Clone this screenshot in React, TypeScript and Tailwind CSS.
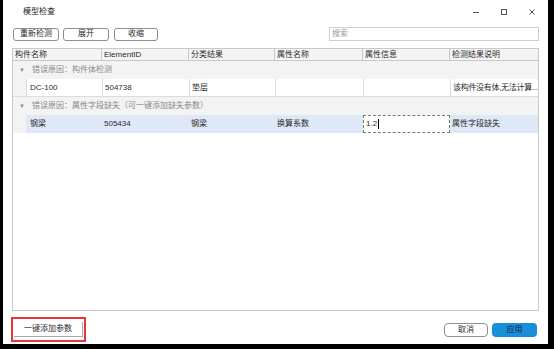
import React from 'react';

const font = { fontFamily: '"Liberation Sans", "Noto Sans CJK SC", sans-serif' };

const cols = ['w-[89px]', 'w-[87px]', 'w-[86px]', 'w-[88px]', 'w-[87px]', 'flex-1'];

const GroupRow: React.FC<{ label: string }> = ({ label }) => (
  <div className="flex h-[18px] items-center bg-[#f3f3f3] text-[#8a8a8a]">
    <span className="ml-[6px] mr-[7px] text-[6px] leading-none">▼</span>
    <span>{label}</span>
  </div>
);

export default function App() {
  return (
    <div className="flex h-[349px] w-[554px] bg-black text-[8px] text-[#2b2b2b]" style={font}>
      <div className="ml-[3px] flex h-[344px] w-[545px] flex-col bg-white px-[9px]">
        {/* title bar */}
        <div className="flex h-[21px] items-center pt-[2px]">
          <span className="ml-[11px] text-[#222]">模型检查</span>
          <div className="ml-auto mr-[4px] flex items-center gap-[22px] text-[#555]">
            <svg width="6" height="6" viewBox="0 0 6 6">
              <line x1="0" y1="3.5" x2="6" y2="3.5" stroke="#555" strokeWidth="1" />
            </svg>
            <svg width="6" height="6" viewBox="0 0 6 6">
              <rect x="0.5" y="0.5" width="5" height="5" fill="none" stroke="#555" strokeWidth="1" />
            </svg>
            <svg width="6" height="6" viewBox="0 0 6 6">
              <path d="M0.5 0.5L5.5 5.5M5.5 0.5L0.5 5.5" stroke="#555" strokeWidth="1" />
            </svg>
          </div>
        </div>

        {/* toolbar */}
        <div className="mt-[6px] flex h-[14px] items-center">
          <button className="ml-[1px] h-[13px] w-[46px] rounded-[3px] border border-[#8f8f8f] bg-white leading-none">重新检测</button>
          <button className="ml-[4px] h-[13px] w-[46px] rounded-[3px] border border-[#8f8f8f] bg-white leading-none">展开</button>
          <button className="ml-[5px] h-[13px] w-[44px] rounded-[3px] border border-[#8f8f8f] bg-white leading-none">收缩</button>
          <div className="ml-auto flex h-[14px] w-[210px] items-center border border-[#cfcfcf] pl-[2px] text-[#9a9a9a]">搜索</div>
        </div>

        {/* table */}
        <div className="mt-[7px] flex h-[263px] flex-col border border-[#c9c9c9]">
          <div className="flex h-[12px] items-center border-b border-[#c9c9c9] bg-[#f4f4f4]">
            {['构件名称', 'ElementID', '分类结果', '属性名称', '属性信息', '检测结果说明'].map((h, i) => (
              <div key={h} className={`${cols[i]} flex h-full items-center border-r border-[#c9c9c9] pl-[2px] last:border-r-0`}>
                {h}
              </div>
            ))}
          </div>

          <GroupRow label="错误原因：构件体检测" />

          <div className="flex h-[18px] items-stretch border-b border-[#dcdcdc] bg-[#f3f3f3]">
            <div className="ml-[13px] flex flex-1 border-l border-[#dcdcdc] bg-white">
              <div className="flex w-[76px] items-center border-r border-[#dcdcdc] pl-[3px]">DC-100</div>
              <div className="flex w-[87px] items-center border-r border-[#dcdcdc] pl-[2px]">504738</div>
              <div className="flex w-[86px] items-center border-r border-[#dcdcdc] pl-[2px]">垫层</div>
              <div className="flex w-[88px] items-center border-r border-[#dcdcdc] pl-[2px]"></div>
              <div className="flex w-[87px] items-center border-r border-[#dcdcdc] pl-[2px]"></div>
              <div className="flex min-w-0 flex-1 items-center overflow-hidden whitespace-nowrap pl-[2px] tracking-[-0.3px]">该构件没有体,无法计算...</div>
            </div>
          </div>

          <GroupRow label="错误原因：属性字段缺失（可一键添加缺失参数）" />

          <div className="flex h-[18px] items-stretch bg-[#f3f3f3]">
            <div className="ml-[13px] flex flex-1 bg-[#dfe8f7]">
              <div className="flex w-[76px] items-center pl-[4px]">钢梁</div>
              <div className="flex w-[87px] items-center pl-[2px]">505434</div>
              <div className="flex w-[86px] items-center pl-[2px]">钢梁</div>
              <div className="flex w-[88px] items-center pl-[2px]">换算系数</div>
              <div className="flex w-[87px] items-center border border-dashed border-[#7a7a7a] bg-white pl-[2px]">
                1.2<span className="ml-[1px] h-[10px] w-px bg-black" />
              </div>
              <div className="flex flex-1 items-center pl-[2px]">属性字段缺失</div>
            </div>
          </div>

          <div className="flex-1 bg-white" />
        </div>

        {/* footer */}
        <div className="mt-[6px] flex h-[25px] items-center">
          <div className="-ml-[1px] flex h-[25px] w-[75px] items-center justify-center border-2 border-[#e8343a]">
            <button className="h-[15px] w-[69px] border-r border-b border-[#a8a8a8] bg-white leading-none">一键添加参数</button>
          </div>
          <button className="ml-auto h-[14px] w-[44px] rounded-[4px] border border-[#8f8f8f] bg-white leading-none">取消</button>
          <button className="ml-[4px] mr-[2px] h-[14px] w-[45px] rounded-[4px] bg-[#1a8fd9] leading-none text-[#10233a]">应用</button>
        </div>
      </div>
    </div>
  );
}
